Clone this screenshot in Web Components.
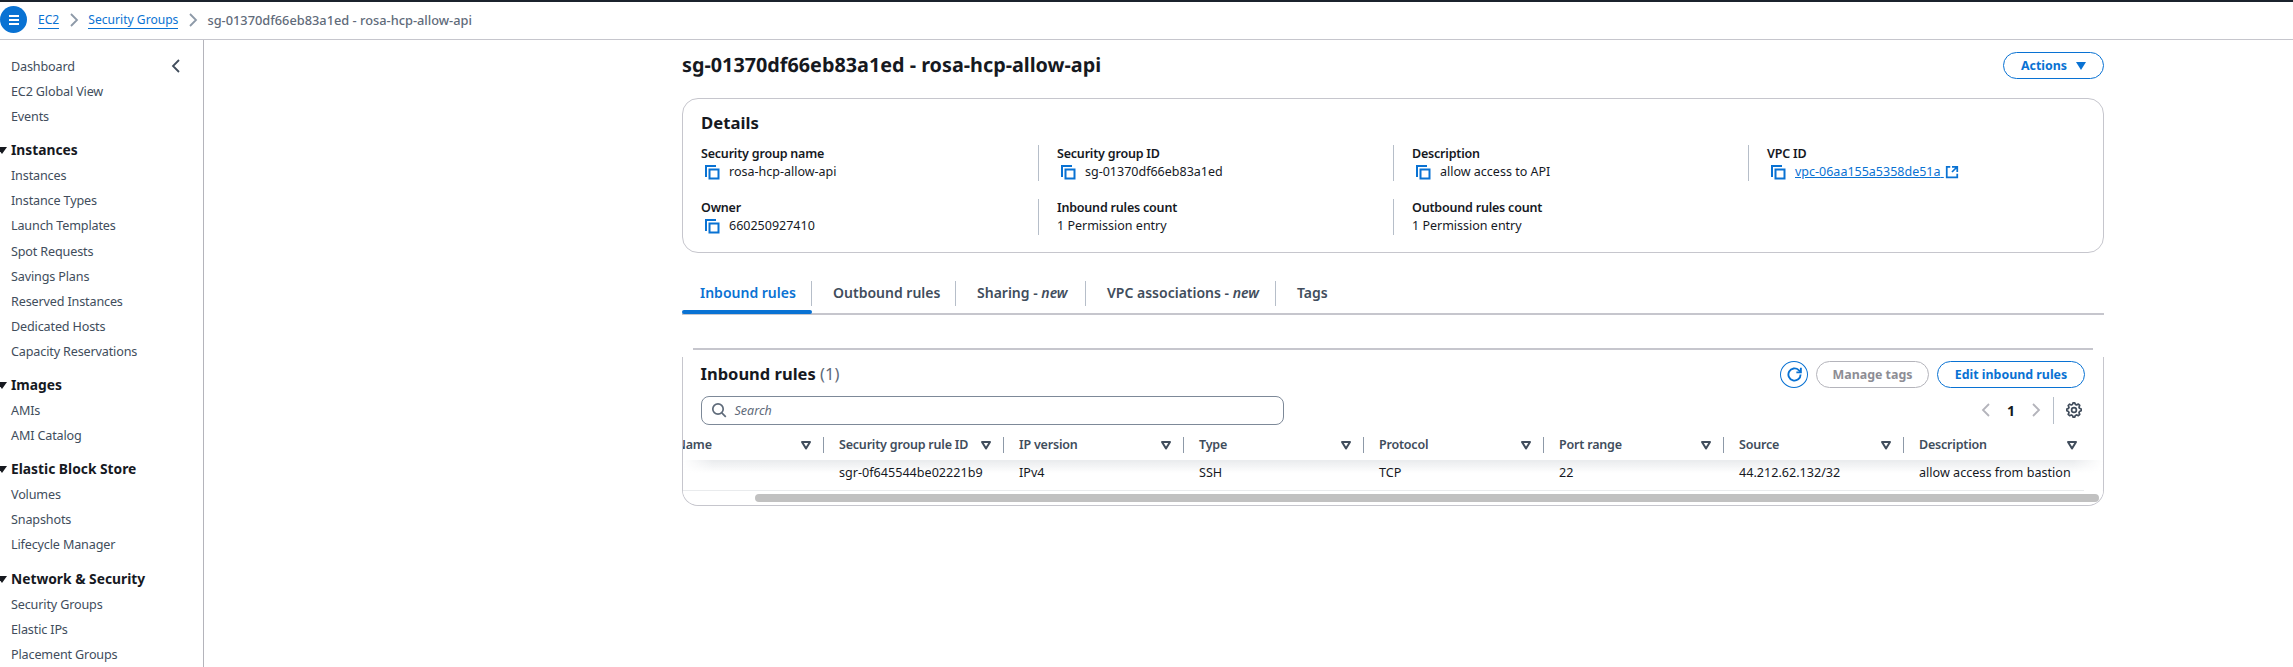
<!DOCTYPE html>
<html lang="en">
<head>
<meta charset="utf-8">
<title>Security group</title>
<style>
html,body{margin:0;padding:0;height:667px;overflow:hidden;background:#fff}
body{font-family:"Noto Sans","Open Sans","Liberation Sans",sans-serif;font-size:14px;color:#16191f}
</style>
</head>
<body>
<aws-app>
  <aws-topbar slot="top">
    <aws-crumb href>EC2</aws-crumb>
    <aws-crumb href>Security Groups</aws-crumb>
    <aws-crumb>sg-01370df66eb83a1ed - rosa-hcp-allow-api</aws-crumb>
  </aws-topbar>
  <aws-sidebar slot="side">
    <aws-nav-item first>Dashboard</aws-nav-item>
    <aws-nav-item>EC2 Global View</aws-nav-item>
    <aws-nav-item>Events</aws-nav-item>
    <aws-nav-group label="Instances">
      <aws-nav-item>Instances</aws-nav-item>
      <aws-nav-item>Instance Types</aws-nav-item>
      <aws-nav-item>Launch Templates</aws-nav-item>
      <aws-nav-item>Spot Requests</aws-nav-item>
      <aws-nav-item>Savings Plans</aws-nav-item>
      <aws-nav-item>Reserved Instances</aws-nav-item>
      <aws-nav-item>Dedicated Hosts</aws-nav-item>
      <aws-nav-item>Capacity Reservations</aws-nav-item>
    </aws-nav-group>
    <aws-nav-group label="Images">
      <aws-nav-item>AMIs</aws-nav-item>
      <aws-nav-item>AMI Catalog</aws-nav-item>
    </aws-nav-group>
    <aws-nav-group label="Elastic Block Store">
      <aws-nav-item>Volumes</aws-nav-item>
      <aws-nav-item>Snapshots</aws-nav-item>
      <aws-nav-item>Lifecycle Manager</aws-nav-item>
    </aws-nav-group>
    <aws-nav-group label="Network &amp; Security">
      <aws-nav-item>Security Groups</aws-nav-item>
      <aws-nav-item>Elastic IPs</aws-nav-item>
      <aws-nav-item>Placement Groups</aws-nav-item>
    </aws-nav-group>
  </aws-sidebar>
  <aws-page>
    <aws-page-header>sg-01370df66eb83a1ed - rosa-hcp-allow-api</aws-page-header>
    <aws-details>
      <aws-detail label="Security group name" copy>rosa-hcp-allow-api</aws-detail>
      <aws-detail label="Security group ID" copy divider>sg-01370df66eb83a1ed</aws-detail>
      <aws-detail label="Description" copy divider>allow access to API</aws-detail>
      <aws-detail label="VPC ID" copy divider link>vpc-06aa155a5358de51a</aws-detail>
      <aws-detail label="Owner" copy>660250927410</aws-detail>
      <aws-detail label="Inbound rules count" divider>1 Permission entry</aws-detail>
      <aws-detail label="Outbound rules count" divider>1 Permission entry</aws-detail>
    </aws-details>
    <aws-tabs>
      <aws-tab active first style="width:130px">Inbound rules</aws-tab>
      <aws-tab style="width:144px">Outbound rules</aws-tab>
      <aws-tab style="width:130px">Sharing - <i>new</i></aws-tab>
      <aws-tab style="width:190px">VPC associations - <i>new</i></aws-tab>
      <aws-tab last>Tags</aws-tab>
    </aws-tabs>
    <aws-rules-table></aws-rules-table>
  </aws-page>
</aws-app>

<script>
const ICONS = {
  copy:'<svg width="16" height="16" viewBox="0 0 16 16" fill="none" stroke="#0972d3" stroke-width="2"><path d="M2 13V2h10"/><rect x="5.5" y="5.5" width="9" height="9"/></svg>',
  ext:'<svg width="14" height="14" viewBox="0 0 16 16" fill="none" stroke="#0972d3" stroke-width="2"><path d="M14 8V2H8M14 2 8 8"/><path d="M6 2H2v12h12v-4"/></svg>',
  caret:'<svg width="12" height="12" viewBox="0 0 12 12" fill="none" stroke="#414d5c" stroke-width="2" stroke-linejoin="round"><path d="M2 3h8L6 9.5z"/></svg>',
  search:'<svg width="16" height="16" viewBox="0 0 16 16" fill="none" stroke="#5f6b7a" stroke-width="1.7"><circle cx="7" cy="7" r="5.2"/><path d="m10.8 10.8 4 4"/></svg>',
  refresh:'<svg width="15" height="15" viewBox="0 0 16 16" fill="none" stroke="#0972d3" stroke-width="2"><path d="M14.5 8a6.5 6.5 0 1 1-2-4.7L14.5 5"/><path d="M14.8 .8v4.9H10"/></svg>',
  gear:'<svg width="16" height="16" viewBox="0 0 16 16" fill="none" stroke="#414d5c" stroke-width="1.7" stroke-linejoin="round"><path d="m13 5.2.7-1.8-1.3-1.3-1.9.8-1.1-.5L8.7.8H7.1l-.7 1.7-1.1.5-1.7-.8-1.4 1.3.8 1.8-.5 1.1-1.7.7v1.7l1.7.7.5 1.1-.8 1.8 1.4 1.3 1.7-.8 1.1.5.7 1.7h1.6l.7-1.7 1.1-.5 1.9.8 1.3-1.3-.7-1.8.5-1.1 1.7-.7V7l-1.7-.7z"/><circle cx="8" cy="8" r="2.4"/></svg>',
  chevL:'<svg width="12" height="16" viewBox="0 0 12 16" fill="none" stroke="currentColor" stroke-width="1.8"><path d="M9 2 3 8l6 6"/></svg>',
  chevR:'<svg width="12" height="16" viewBox="0 0 12 16" fill="none" stroke="currentColor" stroke-width="1.8"><path d="m3 2 6 6-6 6"/></svg>'
};
function def(name, html, extra){
  const t=document.createElement('template'); t.innerHTML=html;
  customElements.define(name, class extends HTMLElement{
    constructor(){super(); this.attachShadow({mode:'open'}).appendChild(t.content.cloneNode(true));}
    connectedCallback(){ if(extra) extra.call(this,this.shadowRoot); }
  });
}

def('aws-app',`<style>
:host{display:grid;grid-template-columns:204px 1fr;grid-template-rows:40px 627px;width:2293px;height:667px;overflow:hidden}
.t{grid-column:1/3}
.s{border-right:1px solid #b4b4bb;overflow:hidden;min-width:0}
.m{min-width:0;overflow:hidden}
</style><div class="t"><slot name="top"></slot></div><div class="s"><slot name="side"></slot></div><div class="m"><slot></slot></div>`);

def('aws-topbar',`<style>
:host{display:flex;align-items:center;box-sizing:border-box;height:40px;border-top:2px solid #1b232d;border-bottom:1px solid #c6c6cd;background:#fff;padding-bottom:2px}
.burger{width:27px;height:27px;border-radius:50%;background:#0972d3;display:flex;align-items:center;justify-content:center;margin-right:11px;flex:none}
</style><div class="burger"><svg width="12" height="10" viewBox="0 0 12 10" fill="none" stroke="#fff" stroke-width="2"><path d="M1 1h10M1 5h10M1 9h10"/></svg></div><slot></slot>`);

def('aws-crumb',`<style>
:host{display:inline-flex;align-items:center;font-size:12.8px;color:#5f6b7a;font-weight:500;white-space:nowrap}
.l{color:#0972d3;border-bottom:1px solid #0972d3;font-weight:400;line-height:17px;font-size:12.1px}
.c{color:#8d99a8;display:inline-flex;width:29px;justify-content:center}
</style><span id="x"><slot></slot></span><span class="c" id="c">${ICONS.chevR}</span>`,function(r){
  if(this.hasAttribute('href')) r.getElementById('x').className='l'; else r.getElementById('c').remove();
});

def('aws-sidebar',`<style>
:host{display:block;position:relative;padding-top:14px;height:100%;box-sizing:border-box;background:#fff}
.close{position:absolute;left:170px;top:18px;color:#414d5c}
</style><div class="close">${ICONS.chevL}</div><slot></slot>`);

def('aws-nav-item',`<style>
:host{display:block;height:25.1px;line-height:25px;padding-left:11px;font-size:12.6px;letter-spacing:-.15px;color:#414d5c;white-space:nowrap}
</style><slot></slot>`);

def('aws-nav-group',`<style>
:host{display:block;margin-top:8px}
h3{margin:0;height:26px;line-height:26px;padding-left:11px;font-size:13.8px;font-weight:700;color:#16191f;position:relative;white-space:nowrap}
h3::before{content:"";position:absolute;left:-3px;top:10px;border-left:5px solid transparent;border-right:5px solid transparent;border-top:7px solid #16191f}
</style><h3 id="h"></h3><slot></slot>`,function(r){r.getElementById('h').textContent=this.getAttribute('label');});

def('aws-page',`<style>
:host{display:block;padding:12px 189px 0 478px;width:2089px;box-sizing:border-box}
</style><slot></slot>`);

def('aws-button',`<style>
:host{display:inline-flex;align-items:center;justify-content:center;box-sizing:border-box;height:27px;border:1.5px solid #0972d3;border-radius:14px;color:#0972d3;font-size:12.4px;font-weight:700;white-space:nowrap;background:#fff;gap:9px}
:host([disabled]){border-color:#b4b4bb;color:#8d8d94}
</style><slot></slot>`);

def('aws-page-header',`<style>
:host{display:flex;justify-content:space-between;align-items:center;height:27px;margin-bottom:19px}
h1{margin:0;font-size:19.8px;text-rendering:geometricPrecision;font-weight:700;color:#16191f;white-space:nowrap;position:relative;top:-1px}
.car{width:0;height:0;border-left:5px solid transparent;border-right:5px solid transparent;border-top:8px solid #0972d3}
</style><h1><slot></slot></h1><aws-button style="width:101px">Actions <span class="car"></span></aws-button>`);

def('aws-details',`<style>
:host{display:block;box-sizing:border-box;height:155px;border:1.5px solid #c6c6cd;border-radius:16px;padding:12px 18px 0;background:#fff}
h2{margin:0 0 9.5px;font-size:16.7px;line-height:24px;font-weight:700;color:#16191f}
.g{display:grid;grid-template-columns:337px 355px 355px 1fr;row-gap:18px}
</style><h2>Details</h2><div class="g"><slot></slot></div>`);

def('aws-detail',`<style>
:host{display:block;box-sizing:border-box;height:36px;line-height:18px;font-size:12.5px;white-space:nowrap}
:host([divider]){border-left:1px solid #b6bec9;padding-left:18px}
.k{font-weight:600;font-size:12.5px;letter-spacing:-.2px;color:#16191f}
.v{display:flex;align-items:center;color:#16191f}
.ic{display:inline-flex;width:28px;padding-left:3px;box-sizing:border-box}
a{color:#0972d3;text-decoration:underline;display:inline-flex;align-items:center;gap:1px}
</style><div class="k" id="k"></div><div class="v" id="v"><slot></slot></div>`,function(r){
  r.getElementById('k').textContent=this.getAttribute('label');
  const v=r.getElementById('v');
  if(this.hasAttribute('link')){
    v.innerHTML='<a><slot></slot>&nbsp;'+ICONS.ext+'</a>';
  }
  if(this.hasAttribute('copy')){
    const s=document.createElement('span'); s.className='ic'; s.innerHTML=ICONS.copy; v.prepend(s);
  }
});

def('aws-tabs',`<style>
:host{display:flex;box-sizing:border-box;height:34px;margin-top:28px;border-bottom:2px solid #c6c6cd}
</style><slot></slot>`);

def('aws-tab',`<style>
:host{display:flex;align-items:flex-start;box-sizing:border-box;height:33px;padding:0 20px 0 21px;flex:none;font-size:14px;font-weight:600;color:#414d5c;white-space:nowrap;position:relative}
:host([first]){padding-left:18px}
span{display:block;line-height:23px}
:host(:not([last]))::after{content:"";position:absolute;right:0;top:0;height:25px;width:1px;background:#b6bec9}
:host([active]){color:#0972d3}
:host([active])::before{content:"";position:absolute;left:0;right:0;bottom:0;height:4px;background:#0972d3;border-radius:2px}
</style><span><slot></slot></span>`);

const COLS=['Name','Security group rule ID','IP version','Type','Protocol','Port range','Source','Description'];
const VALS=['','sgr-0f645544be02221b9','IPv4','SSH','TCP','22','44.212.62.132/32','allow access from bastion'];
def('aws-rules-table',`<style>
:host{display:block;margin-top:33px}
.line{height:1.5px;background:#c6c6cd;margin:0 11px}
.card{margin-top:7px;box-sizing:border-box;height:149.5px;border:1.5px solid #c6c6cd;border-top:none;border-radius:0 0 16px 16px;overflow:hidden;position:relative;background:#fff}
.top{display:flex;justify-content:space-between;align-items:flex-start;padding:4px 18px 0 17.5px;height:39px;box-sizing:border-box}
h2{margin:0;font-size:16.5px;font-weight:700;line-height:25px;color:#16191f;white-space:nowrap}
h2 span{font-weight:400;color:#5f6b7a}
.acts{display:flex;gap:8px}
.tools{display:flex;align-items:center;height:29px;padding-left:17.5px}
.search{width:583px;height:29px;box-sizing:border-box;border:1px solid #7d8998;border-radius:8px;display:flex;align-items:center;padding-left:9px;gap:8px;font-style:italic;font-size:12.5px;color:#5f6b7a}
.pager{margin-left:auto;display:flex;align-items:center;margin-right:21px;color:#b4b4bb;height:27px;font-size:14px}
.pager b{color:#16191f;width:38px;text-align:center;font-weight:700}
.sep{width:1px;height:27px;background:#b6bec9;margin:0 12px 0 11px}
.row{display:grid;grid-template-columns:repeat(8,180px);margin-left:-39px;width:1440px}
.hd{margin-top:6px;height:29px;align-items:center;position:relative;z-index:1}
.sh{height:29px;position:relative;z-index:1;background:#fff}
.sh::after{content:"";position:absolute;left:0;right:0;top:0;height:13px;background:linear-gradient(#e9ebed,rgba(233,235,237,0));-webkit-mask-image:linear-gradient(90deg,transparent,#000 30px,#000 calc(100% - 30px),transparent);mask-image:linear-gradient(90deg,transparent,#000 30px,#000 calc(100% - 30px),transparent)}
.hc{display:flex;align-items:center;justify-content:space-between;box-sizing:border-box;height:16px;padding:0 11px 0 15px;border-right:1px solid #8d99a8;font-size:12.5px;letter-spacing:-.2px;font-weight:600;color:#414d5c;white-space:nowrap;line-height:16px}
.hc:first-child{padding-left:32px}
.hc:last-child{border-right:none;padding-right:6px}
.hc svg{display:block;flex:none}
.tb{height:31px;font-size:12.6px;position:relative;border-bottom:1px solid #e9ebed;box-sizing:border-box;margin-top:-29px}
.tb .c{padding-left:15px;line-height:26px;position:relative;z-index:2;white-space:nowrap;color:#16191f}
.sb{height:14px;position:relative;background:#fff;display:flex;align-items:center;padding:0 4px 0 72px}
.sb i{display:block;flex:1;height:8px;border-radius:4px;background:#c1c1c1}
.clip{overflow:hidden}
.rf{width:28px;height:27px;border:1.5px solid #0972d3;border-radius:50%;box-sizing:border-box;display:flex;align-items:center;justify-content:center}
</style>
<div class="line"></div>
<div class="card">
  <div class="top">
    <h2>Inbound rules <span>(1)</span></h2>
    <div class="acts">
      <div class="rf">${ICONS.refresh}</div>
      <aws-button disabled style="width:113px">Manage tags</aws-button>
      <aws-button style="width:148px">Edit inbound rules</aws-button>
    </div>
  </div>
  <div class="tools">
    <div class="search">${ICONS.search}<span>Search</span></div>
    <div class="pager">${ICONS.chevL}<b>1</b>${ICONS.chevR}<span class="sep"></span>${ICONS.gear}</div>
  </div>
  <div class="clip">
    <div class="row hd" id="hd"></div>
    <div class="sh"></div>
    <div class="row tb" id="tb"></div>
  </div>
  <div class="sb"><i></i></div>
</div>`,function(r){
  r.getElementById('hd').innerHTML=COLS.map(c=>`<div class="hc"><span>${c}</span>${ICONS.caret}</div>`).join('');
  r.getElementById('tb').innerHTML=VALS.map(c=>`<div class="c">${c}</div>`).join('');
});
</script>
</body>
</html>
